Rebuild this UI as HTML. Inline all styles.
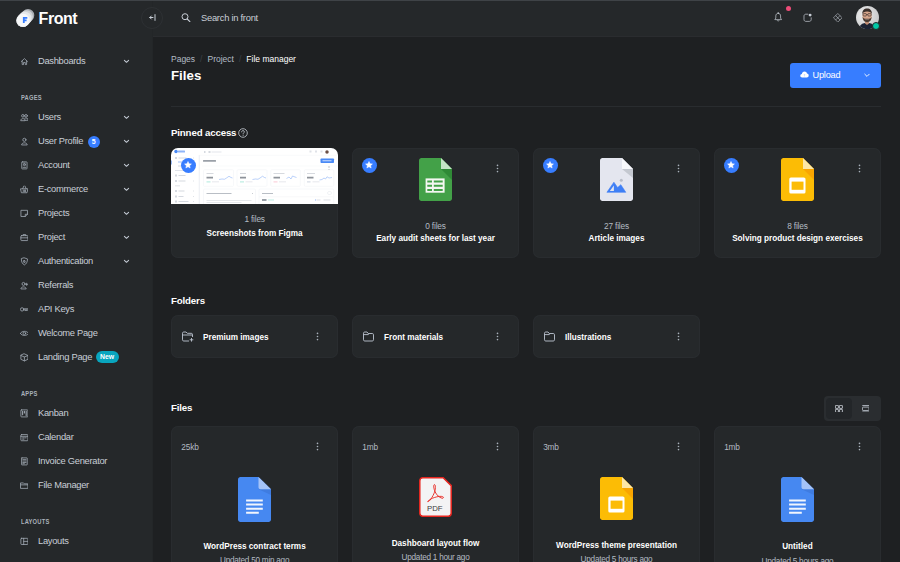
<!DOCTYPE html>
<html><head><meta charset="utf-8">
<style>
*{box-sizing:border-box;margin:0;padding:0}
html,body{width:900px;height:562px;overflow:hidden;background:#1e2022;font-family:"Liberation Sans",sans-serif;color:#fff}
svg{display:block}
#topline{position:absolute;left:0;top:0;width:900px;height:1px;background:#3f4347;z-index:5}
#header{position:absolute;left:0;top:0;width:900px;height:37px;background:transparent}
#hbg{position:absolute;left:0;top:0;width:900px;height:37px;background:#25282a;border-bottom:1px solid #2a2c2f}
#sidebar{position:absolute;left:0;top:0;width:153px;height:562px;background:#25282a;border-right:1px solid #232628}
.nav{position:absolute;left:0;width:150px;height:16px;font-size:9.35px;letter-spacing:-0.3px;color:#c8ced6;line-height:16px}
.nav .t{position:absolute;left:38px;top:0.2px;white-space:nowrap}
.nav svg.i{position:absolute;left:19.6px;top:3.8px;width:8.8px;height:8.8px}
.nav .chev{position:absolute;left:123.3px;top:5px;width:7px;height:7px}
.sub{position:absolute;left:21px;font-size:6.7px;font-weight:bold;letter-spacing:0.25px;color:#a8b0b9;line-height:10px;top:0;transform:scaleX(0.86);transform-origin:0 0;white-space:nowrap}
.b5{display:inline-block;width:12px;height:12px;border-radius:50%;background:#377dff;color:#fff;font-size:7px;font-weight:bold;text-align:center;line-height:12px;margin-left:4.6px;vertical-align:0px;letter-spacing:0}
.bnew{display:inline-block;padding:0 4.4px;height:11.6px;border-radius:6px;background:#09a5be;color:#fff;font-size:6.9px;font-weight:bold;line-height:11.6px;margin-left:3.6px;vertical-align:1px;letter-spacing:0}
.card{position:absolute;background:#25282a;border-radius:7px;box-shadow:inset 0 0 0 1px #292c2f}
.ttl{position:absolute;font-weight:bold;font-size:9.7px;letter-spacing:-0.15px;color:#fff;white-space:nowrap;line-height:12px}
.ctr{position:absolute;left:0;width:100%;text-align:center;white-space:nowrap}
.cnt{font-size:8.3px;letter-spacing:-0.18px;color:#b4bbc3;line-height:10px}
.nm{font-size:8.2px;font-weight:bold;color:#fff;line-height:10px}
.dots{position:absolute;width:3px;height:9px}
.star{position:absolute;width:15px;height:15px;border-radius:50%;background:#377dff}
.star svg{position:absolute;left:3.5px;top:3.5px;width:8px;height:8px}

.upd{font-size:8.2px;letter-spacing:-0.25px}

</style></head><body>
<div id="hbg"></div>
<div id="header" style="z-index:4">
  <!-- logo -->
  <svg style="position:absolute;left:15.2px;top:8.8px" width="21" height="21" viewBox="0 0 21 21">
    <path d="M7.8 11.6 L13 6.3" stroke="#a9adb2" stroke-width="12.6" stroke-linecap="round"/>
    <path d="M7.8 11.6 L11.6 7.6" stroke="#cfd2d5" stroke-width="12.8" stroke-linecap="round"/>
    <path d="M7.8 11.6 L10 9.3" stroke="#e6e8ea" stroke-width="13" stroke-linecap="round"/>
    <circle cx="8.3" cy="11.2" r="6.4" fill="#f7f8f9"/>
    <path d="M8.8 8 V14.1 M8 8.9 H12.3 M8 11.3 H11.6" stroke="#377dff" stroke-width="1.8" fill="none"/>
  </svg>
  <div style="position:absolute;left:38.6px;top:8.9px;font-size:16px;letter-spacing:-0.45px;font-weight:bold;color:#fff;line-height:20px">Front</div>
  <!-- collapse -->
  <div style="position:absolute;left:141px;top:7.2px;width:22px;height:22px;border-radius:50%;border:1px solid #2e3134;background:#25282a;z-index:3">
    <svg style="position:absolute;left:7px;top:6px" width="7" height="7" viewBox="0 0 7 7"><path d="M4 3.5 H0.8 M2.3 2 L0.8 3.5 L2.3 5 M6 0.6 V6.4" stroke="#c8ced6" stroke-width="1" fill="none" stroke-linecap="round" stroke-linejoin="round"/></svg>
  </div>
  <!-- search -->
  <svg style="position:absolute;left:180.5px;top:12.8px" width="10" height="9" viewBox="0 0 10 9"><circle cx="4" cy="3.7" r="3" stroke="#c8ced6" stroke-width="1" fill="none"/><path d="M6.2 6 L8.9 8.6" stroke="#c8ced6" stroke-width="1.1" stroke-linecap="round"/></svg>
  <div style="position:absolute;left:201px;top:11.7px;font-size:9.4px;letter-spacing:-0.27px;color:#c8ced6;line-height:11px;white-space:nowrap">Search in front</div>
  <!-- right icons -->
  <svg style="position:absolute;left:774.4px;top:12.3px" width="8.4" height="10" viewBox="0 0 8.4 10"><path d="M4.2 1.3 C2.7 1.3 1.8 2.4 1.8 3.9 V6.1 L0.8 7.6 H7.6 L6.6 6.1 V3.9 C6.6 2.4 5.7 1.3 4.2 1.3 Z M3.3 8.6 C3.6 9.3 4.8 9.3 5.1 8.6 M4.2 0.4 V1.3" stroke="#c8ced6" stroke-width="0.7" fill="none" stroke-linejoin="round" stroke-linecap="round"/></svg>
  <div style="position:absolute;left:785.6px;top:5.6px;width:5.4px;height:5.4px;border-radius:50%;background:#ed4c78"></div>
  <svg style="position:absolute;left:803.4px;top:12.6px" width="9.2" height="9.2" viewBox="0 0 9.2 9.2"><path d="M5.2 1.2 H2.8 C1.8 1.2 1 2 1 3 V6.6 C1 7.6 1.8 8.4 2.8 8.4 H6.4 C7.4 8.4 8.2 7.6 8.2 6.6 V4.4" stroke="#c8ced6" stroke-width="0.7" fill="none"/><circle cx="7.1" cy="2.1" r="1.45" fill="#c8ced6"/></svg>
  <svg style="position:absolute;left:832.5px;top:12.6px" width="9.6" height="9.6" viewBox="0 0 10 10"><path d="M5 0.5 L9.5 5 L5 9.5 L0.5 5 Z M2.75 2.75 L7.25 7.25 M7.25 2.75 L2.75 7.25" stroke="#c8ced6" stroke-width="0.6" fill="none" stroke-linejoin="round"/></svg>
  <!-- avatar -->
  <div style="position:absolute;left:856px;top:6.3px;width:23px;height:23px;border-radius:50%;overflow:hidden">
    <svg width="23" height="23" viewBox="0 0 23 23">
      <defs><radialGradient id="ag" cx="0.35" cy="0.4" r="0.75"><stop offset="0" stop-color="#f0f0f0"/><stop offset="1" stop-color="#c2c3c5"/></radialGradient></defs>
      <rect width="23" height="23" fill="url(#ag)"/>
      <path d="M2.5 23 C3.5 18.8 7 16.8 11 16.8 C15 16.8 18.5 18.8 19.5 23 Z" fill="#1b2234"/>
      <path d="M9 15 H13 V17.5 L11 19 L9 17.5 Z" fill="#c08d74"/>
      <ellipse cx="11.1" cy="9.8" rx="4.7" ry="6.1" fill="#d7a68c"/>
      <path d="M6.3 8.5 C6 4.5 8.2 2.6 11.1 2.6 C14 2.6 16.2 4.5 15.9 8.5 C15.2 6.4 14 5.6 11.1 5.6 C8.2 5.6 7 6.4 6.3 8.5 Z" fill="#3b302b"/>
      <path d="M6.6 10.8 C6.8 14.8 8.8 16.2 11.1 16.2 C13.4 16.2 15.4 14.8 15.6 10.8 C15 12.6 13.6 12.8 11.1 12.8 C8.6 12.8 7.2 12.6 6.6 10.8 Z" fill="#4a3b33"/>
      <path d="M9.3 13.2 C10.3 13.9 11.9 13.9 12.9 13.2 C12.4 14.4 9.8 14.4 9.3 13.2 Z" fill="#f4e9e4"/>
      <rect x="7" y="7.6" width="3.4" height="2.4" rx="0.8" fill="none" stroke="#2a2422" stroke-width="0.6"/>
      <rect x="11.8" y="7.6" width="3.4" height="2.4" rx="0.8" fill="none" stroke="#2a2422" stroke-width="0.6"/>
      <path d="M10.4 8.5 H11.8" stroke="#2a2422" stroke-width="0.5"/>
    </svg>
  </div>
  <div style="position:absolute;left:871.6px;top:21.8px;width:8.4px;height:8.4px;border-radius:50%;background:#00c9a7;border:1.2px solid #25282a"></div>
</div>
<div id="sidebar" style="z-index:2">
<div class="nav" style="top:53px"><svg class="i" viewBox="0 0 10 10" stroke="#a3abb5" stroke-width="0.9" fill="none" stroke-linecap="round" stroke-linejoin="round" ><path d="M1.5 5.2 L5 1.8 L8.5 5.2 M2.5 4.4 V8.6 H4 V6.2 H6 V8.6 H7.5 V4.4"/></svg><span class="t">Dashboards</span><svg class="chev" viewBox="0 0 7 7"><path d="M1.4 2.4 L3.5 4.3 L5.6 2.4" stroke="#c5ccd5" stroke-width="1.05" fill="none" stroke-linecap="round" stroke-linejoin="round"/></svg></div>
<div class="nav" style="top:109px"><svg class="i" viewBox="0 0 10 10" stroke="#a3abb5" stroke-width="0.9" fill="none" stroke-linecap="round" stroke-linejoin="round" ><circle cx="3.3" cy="3.2" r="1.5"/><circle cx="6.9" cy="3.2" r="1.5"/><path d="M0.8 8.3 C0.8 5.6 5.8 5.6 5.8 8.3 Z M5.4 5.9 C7 5.2 9.4 5.8 9.4 8.3 H5.9"/></svg><span class="t">Users</span><svg class="chev" viewBox="0 0 7 7"><path d="M1.4 2.4 L3.5 4.3 L5.6 2.4" stroke="#c5ccd5" stroke-width="1.05" fill="none" stroke-linecap="round" stroke-linejoin="round"/></svg></div>
<div class="nav" style="top:133px"><svg class="i" viewBox="0 0 10 10" stroke="#a3abb5" stroke-width="0.9" fill="none" stroke-linecap="round" stroke-linejoin="round" ><circle cx="5" cy="3.2" r="1.8"/><path d="M1.8 8.6 C1.8 5.8 8.2 5.8 8.2 8.6 Z"/></svg><span class="t">User Profile<span class="b5">5</span></span><svg class="chev" viewBox="0 0 7 7"><path d="M1.4 2.4 L3.5 4.3 L5.6 2.4" stroke="#c5ccd5" stroke-width="1.05" fill="none" stroke-linecap="round" stroke-linejoin="round"/></svg></div>
<div class="nav" style="top:157px"><svg class="i" viewBox="0 0 10 10" stroke="#a3abb5" stroke-width="0.9" fill="none" stroke-linecap="round" stroke-linejoin="round" ><rect x="2" y="1" width="6" height="8" rx="0.6"/><circle cx="5" cy="4.3" r="1.1"/><path d="M3.4 7.2 H6.6 M4 2.4 H6"/></svg><span class="t">Account</span><svg class="chev" viewBox="0 0 7 7"><path d="M1.4 2.4 L3.5 4.3 L5.6 2.4" stroke="#c5ccd5" stroke-width="1.05" fill="none" stroke-linecap="round" stroke-linejoin="round"/></svg></div>
<div class="nav" style="top:181px"><svg class="i" viewBox="0 0 10 10" stroke="#a3abb5" stroke-width="0.9" fill="none" stroke-linecap="round" stroke-linejoin="round" ><path d="M1 4.3 H9 L8 8.8 H2 Z M3 4.3 L4.3 1.3 M7 4.3 L5.7 1.3 M3.7 5.6 V7.5 M5 5.6 V7.5 M6.3 5.6 V7.5"/></svg><span class="t">E-commerce</span><svg class="chev" viewBox="0 0 7 7"><path d="M1.4 2.4 L3.5 4.3 L5.6 2.4" stroke="#c5ccd5" stroke-width="1.05" fill="none" stroke-linecap="round" stroke-linejoin="round"/></svg></div>
<div class="nav" style="top:205px"><svg class="i" viewBox="0 0 10 10" stroke="#a3abb5" stroke-width="0.9" fill="none" stroke-linecap="round" stroke-linejoin="round" ><path d="M1.5 1.5 H8.5 V6 L6 8.5 H1.5 Z M8.5 6 H6 V8.5"/></svg><span class="t">Projects</span><svg class="chev" viewBox="0 0 7 7"><path d="M1.4 2.4 L3.5 4.3 L5.6 2.4" stroke="#c5ccd5" stroke-width="1.05" fill="none" stroke-linecap="round" stroke-linejoin="round"/></svg></div>
<div class="nav" style="top:229px"><svg class="i" viewBox="0 0 10 10" stroke="#a3abb5" stroke-width="0.9" fill="none" stroke-linecap="round" stroke-linejoin="round" ><rect x="1" y="3" width="8" height="5.6" rx="0.7"/><path d="M3.5 3 V1.8 H6.5 V3 M1 5.5 H9"/></svg><span class="t">Project</span><svg class="chev" viewBox="0 0 7 7"><path d="M1.4 2.4 L3.5 4.3 L5.6 2.4" stroke="#c5ccd5" stroke-width="1.05" fill="none" stroke-linecap="round" stroke-linejoin="round"/></svg></div>
<div class="nav" style="top:253px"><svg class="i" viewBox="0 0 10 10" stroke="#a3abb5" stroke-width="0.9" fill="none" stroke-linecap="round" stroke-linejoin="round" ><path d="M5 1 L8.5 2.2 C8.5 6 7 8 5 9 C3 8 1.5 6 1.5 2.2 Z"/><rect x="4.2" y="4.2" width="1.6" height="2" rx="0.3"/></svg><span class="t">Authentication</span><svg class="chev" viewBox="0 0 7 7"><path d="M1.4 2.4 L3.5 4.3 L5.6 2.4" stroke="#c5ccd5" stroke-width="1.05" fill="none" stroke-linecap="round" stroke-linejoin="round"/></svg></div>
<div class="nav" style="top:277px"><svg class="i" viewBox="0 0 10 10" stroke="#a3abb5" stroke-width="0.9" fill="none" stroke-linecap="round" stroke-linejoin="round" ><circle cx="4" cy="3.3" r="1.7"/><path d="M1 8.6 C1 5.9 7 5.9 7 8.6 Z M7.6 2.5 V5 M6.4 3.75 H8.9"/></svg><span class="t">Referrals</span></div>
<div class="nav" style="top:301px"><svg class="i" viewBox="0 0 10 10" stroke="#a3abb5" stroke-width="0.9" fill="none" stroke-linecap="round" stroke-linejoin="round" ><circle cx="2.4" cy="5" r="1.9"/><path d="M4.3 4.3 H9.6 L10 5 L9.6 5.7 H4.3 M6.5 5.7 V6.4 M7.8 5.7 V6.4"/></svg><span class="t">API Keys</span></div>
<div class="nav" style="top:325px"><svg class="i" viewBox="0 0 10 10" stroke="#a3abb5" stroke-width="0.9" fill="none" stroke-linecap="round" stroke-linejoin="round" ><path d="M0.3 5 C2.2 1.8 7.8 1.8 9.7 5 C7.8 8.2 2.2 8.2 0.3 5 Z"/><circle cx="5" cy="5" r="1.5"/></svg><span class="t">Welcome Page</span></div>
<div class="nav" style="top:349px"><svg class="i" viewBox="0 0 10 10" stroke="#a3abb5" stroke-width="0.9" fill="none" stroke-linecap="round" stroke-linejoin="round" ><path d="M5 1 L9 2.8 V7.2 L5 9 L1 7.2 V2.8 Z M1 2.8 L5 4.6 L9 2.8 M5 4.6 V9"/></svg><span class="t">Landing Page<span class="bnew">New</span></span></div>
<div class="nav" style="top:405px"><svg class="i" viewBox="0 0 10 10" stroke="#a3abb5" stroke-width="0.9" fill="none" stroke-linecap="round" stroke-linejoin="round" ><rect x="1" y="1" width="8" height="8" rx="0.8"/><path d="M3 2.5 V6.5 M5 2.5 V4.5 M7 2.5 V7.5" stroke-width="1.2"/></svg><span class="t">Kanban</span></div>
<div class="nav" style="top:429px"><svg class="i" viewBox="0 0 10 10" stroke="#a3abb5" stroke-width="0.9" fill="none" stroke-linecap="round" stroke-linejoin="round" ><rect x="1" y="1.8" width="8" height="7" rx="0.8"/><path d="M1 3.8 H9 M3 5.5 H4.5 M5.5 5.5 H7 M3 7 H4.5"/></svg><span class="t">Calendar</span></div>
<div class="nav" style="top:453px"><svg class="i" viewBox="0 0 10 10" stroke="#a3abb5" stroke-width="0.9" fill="none" stroke-linecap="round" stroke-linejoin="round" ><rect x="1.8" y="1" width="6.4" height="8" rx="0.4"/><path d="M3.2 3 H6.8 M3.2 4.6 H6.8 M3.2 6.2 H6.8 M3.2 7.6 H5"/></svg><span class="t">Invoice Generator</span></div>
<div class="nav" style="top:477px"><svg class="i" viewBox="0 0 10 10" stroke="#a3abb5" stroke-width="0.9" fill="none" stroke-linecap="round" stroke-linejoin="round" ><path d="M1 2.2 H4 L5 3.2 H9 V8.4 H1 Z M1 4.4 H9"/></svg><span class="t">File Manager</span></div>
<div class="nav" style="top:533px"><svg class="i" viewBox="0 0 10 10" stroke="#a3abb5" stroke-width="0.9" fill="none" stroke-linecap="round" stroke-linejoin="round" ><rect x="1" y="1.5" width="8" height="7" rx="0.6"/><path d="M4.2 1.5 V8.5 M4.2 5 H9"/></svg><span class="t">Layouts</span></div>
<div class="sub" style="top:92.6px">PAGES</div>
<div class="sub" style="top:388.6px">APPS</div>
<div class="sub" style="top:516.6px">LAYOUTS</div>
</div>
<div id="topline"></div>

<!-- main -->
<div style="position:absolute;left:171px;top:54px;font-size:8.5px;line-height:10px;white-space:nowrap;color:#bdc5d1">
  <span style="color:#b4bcc6">Pages</span><span style="color:#3d4146;margin:0 5px">/</span><span style="color:#b4bcc6">Project</span><span style="color:#3d4146;margin:0 5px">/</span><span style="color:#fff">File manager</span>
</div>
<div style="position:absolute;left:171px;top:67.5px;font-size:13.3px;font-weight:bold;line-height:15px">Files</div>

<div style="position:absolute;left:790px;top:63px;width:91px;height:25px;border-radius:3px;background:#377dff">
  <svg style="position:absolute;left:9.5px;top:7.7px" width="9" height="7" viewBox="0 0 9 7"><path d="M2.2 6.5 C1 6.5 0.3 5.7 0.3 4.8 C0.3 3.9 1 3.2 1.9 3.1 C2 1.6 3.1 0.5 4.5 0.5 C5.8 0.5 6.8 1.4 7 2.6 C8 2.7 8.7 3.5 8.7 4.5 C8.7 5.6 7.9 6.5 6.8 6.5 Z" fill="#fff"/><path d="M4.5 5.5 V3.2 M3.6 4.1 L4.5 3.2 L5.4 4.1" stroke="#b9d1ff" stroke-width="0.6" fill="none"/></svg>
  <div style="position:absolute;left:22.5px;top:7px;font-size:9.2px;letter-spacing:-0.2px;color:#fff;line-height:11px">Upload</div>
  <svg style="position:absolute;left:73.5px;top:10px" width="6" height="5" viewBox="0 0 6 5"><path d="M0.8 1.2 L3 3.4 L5.2 1.2" stroke="#fff" stroke-width="0.9" fill="none" stroke-linecap="round" stroke-linejoin="round"/></svg>
</div>
<div style="position:absolute;left:171px;top:106px;width:710px;height:1px;background:#292c2f"></div>

<div class="ttl" style="left:171px;top:127px">Pinned access</div>
<svg style="position:absolute;left:238px;top:128px" width="10" height="10" viewBox="0 0 10 10"><circle cx="5" cy="5" r="4.3" stroke="#c8ced6" stroke-width="0.8" fill="none"/><path d="M3.6 3.9 C3.6 3.1 4.2 2.6 5 2.6 C5.8 2.6 6.4 3.1 6.4 3.8 C6.4 4.7 5.1 4.8 5.1 5.9" stroke="#c8ced6" stroke-width="0.8" fill="none" stroke-linecap="round"/><circle cx="5.1" cy="7.3" r="0.5" fill="#c8ced6"/></svg>

<div class="card" style="left:171px;top:148px;width:167.2px;height:110px;overflow:hidden"><svg width="167" height="56" viewBox="0 0 334 112" style="position:absolute;left:0;top:0">
<rect width="334" height="112" fill="#ffffff"/>
<line x1="56.5" y1="14" x2="56.5" y2="112" stroke="#e3e7ee" stroke-width="1.5"/>
<line x1="56" y1="14.5" x2="334" y2="14.5" stroke="#f0f2f6" stroke-width="1"/>
<line x1="62" y1="36" x2="334" y2="36" stroke="#f2f4f7" stroke-width="1"/>
<circle cx="10" cy="7" r="3.5" fill="#4a8af6"/><rect x="14" y="5" width="14" height="4" rx="1" fill="#8fb5f8"/>
<g fill="#d5d9e0"><rect x="8" y="18" width="4" height="4"/><rect x="15" y="19" width="16" height="2"/><rect x="14" y="27" width="14" height="2" fill="#9dbdf7"/><rect x="14" y="35" width="10" height="2"/>
<rect x="8" y="44" width="22" height="1.5"/><rect x="8" y="53" width="4" height="4"/><rect x="15" y="54" width="14" height="2"/><rect x="8" y="64" width="4" height="4"/><rect x="15" y="65" width="14" height="2"/>
<rect x="8" y="75" width="10" height="1.5"/><rect x="8" y="84" width="4" height="4"/><rect x="15" y="85" width="12" height="2"/><rect x="8" y="95" width="4" height="4"/><rect x="15" y="96" width="10" height="2"/><rect x="8" y="105" width="4" height="4"/><rect x="15" y="106" width="20" height="2"/></g>
<g fill="#e0e3e8"><rect x="44" y="19" width="2" height="2"/><rect x="44" y="65" width="2" height="2"/><rect x="44" y="85" width="2" height="2"/><rect x="44" y="96" width="2" height="2"/><rect x="44" y="106" width="2" height="2"/></g>
<rect x="0" y="25" width="2" height="8" fill="#9dbdf7"/>
<rect x="66" y="6" width="3" height="4" fill="#d5d9e0"/><rect x="75" y="6" width="4" height="4" fill="#d5d9e0"/><rect x="81" y="7" width="20" height="2" fill="#e3e6eb"/>
<g fill="#dfe2e8"><rect x="277" y="5" width="4" height="4"/><rect x="288" y="5" width="4" height="4"/><rect x="299" y="5" width="4" height="4"/></g><circle cx="312" cy="8" r="3.5" fill="#6b4f45"/>
<rect x="64" y="24" width="26" height="3.5" rx="1" fill="#9aa0a8"/>
<rect x="299" y="21" width="27" height="9" rx="1.5" fill="#4a8af6"/><rect x="303" y="24.5" width="18" height="2" fill="#c9dcfd"/>
<g fill="#8a8f96"><rect x="315" y="37" width="2" height="2"/><rect x="315" y="42" width="2" height="2"/><rect x="315" y="47" width="2" height="2"/></g>
<g fill="#ffffff" stroke="#eff1f5" stroke-width="1">
<rect x="65" y="43.5" width="60" height="33" rx="2"/><rect x="132" y="43.5" width="60" height="33" rx="2"/><rect x="199.5" y="43.5" width="59" height="33" rx="2"/><rect x="266.5" y="43.5" width="59" height="33" rx="2"/>
<rect x="65" y="82" width="104" height="34" rx="2"/><rect x="176" y="82" width="149.5" height="34" rx="2"/>
</g>
<g fill="#c9cdd3"><rect x="71" y="50" width="14" height="1.5"/><rect x="138" y="50" width="12" height="1.5"/><rect x="205" y="50" width="22" height="1.5"/><rect x="272" y="50" width="16" height="1.5"/></g>
<g fill="#8d9299"><rect x="71" y="57.5" width="13" height="3.5"/><rect x="138" y="57.5" width="12" height="3.5"/><rect x="205" y="57.5" width="13" height="3.5"/><rect x="272" y="57.5" width="13" height="3.5"/></g>
<g fill="#bfeee3"><rect x="71" y="66.5" width="8" height="2.5"/><rect x="138" y="66.5" width="8" height="2.5"/></g><rect x="205" y="66.5" width="8" height="2.5" fill="#fcd3dd"/><rect x="272" y="66.5" width="7" height="2.5" fill="#d8dde6"/>
<g fill="#dde0e5"><rect x="82" y="67" width="14" height="1.5"/><rect x="149" y="67" width="14" height="1.5"/><rect x="216" y="67" width="14" height="1.5"/><rect x="283" y="67" width="14" height="1.5"/></g>
<g fill="none" stroke="#8fb3f6" stroke-width="1.2"><path d="M96 63 L102 62 L107 62.5 L111 60 L116 56.5 L120 59 L123 60"/><path d="M163 63 L169 62 L174 62.5 L178 60 L183 56.5 L187 59 L190 60"/><path d="M231 61 L236 58 L240 62 L243 56 L248 58 L251 59"/><path d="M297 64 L302 63 L306 60 L309 62 L312 57.5 L316 60 L322 59"/></g>
<rect x="71" y="90" width="50" height="2" fill="#b9bec5"/><rect x="162" y="90" width="2" height="2" fill="#c9cdd3"/>
<rect x="71" y="104" width="90" height="1.5" fill="#dde0e5"/><rect x="71" y="108" width="70" height="1.5" fill="#dde0e5"/>
<rect x="182" y="90" width="22" height="2" fill="#b9bec5"/><rect x="313" y="87" width="8" height="6" rx="3" fill="none" stroke="#e3e6ea" stroke-width="1"/>
<line x1="176" y1="97.5" x2="325" y2="97.5" stroke="#f0f2f5" stroke-width="1"/>
<rect x="182" y="102" width="9" height="4" fill="#9aa0a8"/><rect x="194" y="103" width="12" height="2" fill="#bfeee3"/>
<g fill="#dde0e5"><rect x="291" y="103" width="8" height="2"/><rect x="305" y="103" width="14" height="2"/></g><rect x="288" y="103" width="2" height="2" fill="#8fb3f6"/>
</svg>
<div class="ctr cnt" style="top:66px">1 files</div>
<div class="ctr nm" style="top:80.49999999999999px">Screenshots from Figma</div></div>
<div class="star" style="left:180.9px;top:157.5px"><svg viewBox="0 0 10 10"><path d="M5 0.6 L6.3 3.4 L9.3 3.7 L7 5.8 L7.7 8.8 L5 7.2 L2.3 8.8 L3 5.8 L0.7 3.7 L3.7 3.4 Z" fill="#fff" stroke="#fff" stroke-width="0.6" stroke-linejoin="round"/></svg></div>
<div class="card" style="left:351.95px;top:148px;width:167.2px;height:110px">
<svg style="position:absolute;left:67px;top:10px" width="33" height="43" viewBox="0 0 33 43"><path d="M2.5 0 H22 L33 11 V40.5 C33 41.9 31.9 43 30.5 43 H2.5 C1.1 43 0 41.9 0 40.5 V2.5 C0 1.1 1.1 0 2.5 0 Z" fill="#43a148"/>
<path d="M22 11 L33 11 V22 Z" fill="#2f8a36"/>
<path d="M22 0 L33 11 H22 Z" fill="#c5e5c6"/>
<rect x="6.6" y="20.4" width="19" height="14.3" fill="#f4f7f2"/>
<path d="M8.3 22.6 H13 V24.6 H8.3 Z M14.8 22.6 H23.7 V24.6 H14.8 Z M8.3 26.8 H13 V28.8 H8.3 Z M14.8 26.8 H23.7 V28.8 H14.8 Z M8.3 30.9 H13 V32.9 H8.3 Z M14.8 30.9 H23.7 V32.9 H14.8 Z" fill="#43a148"/></svg>
<svg style="position:absolute;left:144.5px;top:16.0px" width="3" height="9" viewBox="0 0 3 9"><g fill="#a9b1bb"><circle cx="1.5" cy="1.4" r="0.8"/><circle cx="1.5" cy="4.5" r="0.8"/><circle cx="1.5" cy="7.6" r="0.8"/></g></svg>
<div class="ctr cnt" style="top:72.69999999999999px">0 files</div>
<div class="ctr nm" style="top:86.3px">Early audit sheets for last year</div></div>
<div class="star" style="left:361.84999999999997px;top:157.9px"><svg viewBox="0 0 10 10"><path d="M5 0.6 L6.3 3.4 L9.3 3.7 L7 5.8 L7.7 8.8 L5 7.2 L2.3 8.8 L3 5.8 L0.7 3.7 L3.7 3.4 Z" fill="#fff" stroke="#fff" stroke-width="0.6" stroke-linejoin="round"/></svg></div>
<div class="card" style="left:532.9px;top:148px;width:167.2px;height:110px">
<svg style="position:absolute;left:67px;top:10px" width="33" height="43" viewBox="0 0 33 43"><path d="M2.5 0 H22 L33 11 V40.5 C33 41.9 31.9 43 30.5 43 H2.5 C1.1 43 0 41.9 0 40.5 V2.5 C0 1.1 1.1 0 2.5 0 Z" fill="#e4e6ef"/>
<path d="M22 0 L33 11 H22 Z" fill="#f7f8fb"/>
<path d="M22 11 L33 11 V20 Z" fill="#c4c8d0"/>
<path d="M6.9 34.3 L13.9 24.2 L17.6 29.6 L20.8 26.7 L25.8 34.3 Z" fill="#3f7ff5" stroke="#3f7ff5" stroke-width="0.6" stroke-linejoin="round"/>
<path d="M9.8 32.9 L13.9 27.6 V32.9 Z" fill="#e4e6ef"/>
<circle cx="21.3" cy="22.2" r="1.5" fill="#b7bcc6"/></svg>
<svg style="position:absolute;left:144.5px;top:16.0px" width="3" height="9" viewBox="0 0 3 9"><g fill="#a9b1bb"><circle cx="1.5" cy="1.4" r="0.8"/><circle cx="1.5" cy="4.5" r="0.8"/><circle cx="1.5" cy="7.6" r="0.8"/></g></svg>
<div class="ctr cnt" style="top:72.69999999999999px">27 files</div>
<div class="ctr nm" style="top:86.3px">Article images</div></div>
<div class="star" style="left:542.8px;top:157.9px"><svg viewBox="0 0 10 10"><path d="M5 0.6 L6.3 3.4 L9.3 3.7 L7 5.8 L7.7 8.8 L5 7.2 L2.3 8.8 L3 5.8 L0.7 3.7 L3.7 3.4 Z" fill="#fff" stroke="#fff" stroke-width="0.6" stroke-linejoin="round"/></svg></div>
<div class="card" style="left:713.85px;top:148px;width:167.2px;height:110px">
<svg style="position:absolute;left:67px;top:10px" width="33" height="43" viewBox="0 0 33 43"><path d="M2.5 0 H22 L33 11 V40.5 C33 41.9 31.9 43 30.5 43 H2.5 C1.1 43 0 41.9 0 40.5 V2.5 C0 1.1 1.1 0 2.5 0 Z" fill="#fcbc05"/>
<path d="M22 11 L33 11 V22 Z" fill="#f9a500"/>
<path d="M22 0 L33 11 H22 Z" fill="#fde7a6"/>
<rect x="8.3" y="19.4" width="16.2" height="16.2" rx="1.6" fill="#fff"/>
<rect x="10.6" y="23.6" width="11.9" height="8.2" fill="#fcbc05"/></svg>
<svg style="position:absolute;left:144.5px;top:16.0px" width="3" height="9" viewBox="0 0 3 9"><g fill="#a9b1bb"><circle cx="1.5" cy="1.4" r="0.8"/><circle cx="1.5" cy="4.5" r="0.8"/><circle cx="1.5" cy="7.6" r="0.8"/></g></svg>
<div class="ctr cnt" style="top:72.69999999999999px">8 files</div>
<div class="ctr nm" style="top:86.3px">Solving product design exercises</div></div>
<div class="star" style="left:723.75px;top:157.9px"><svg viewBox="0 0 10 10"><path d="M5 0.6 L6.3 3.4 L9.3 3.7 L7 5.8 L7.7 8.8 L5 7.2 L2.3 8.8 L3 5.8 L0.7 3.7 L3.7 3.4 Z" fill="#fff" stroke="#fff" stroke-width="0.6" stroke-linejoin="round"/></svg></div>

<div class="ttl" style="left:171px;top:294.6px">Folders</div>
<div class="card" style="left:171px;top:315px;width:167.2px;height:43px"><svg style="position:absolute;left:10px;top:15.5px" width="13" height="11" viewBox="0 0 13 11"><path d="M8 10 H2.7 C2 10 1.5 9.5 1.5 8.8 V2.2 C1.5 1.5 2 1 2.7 1 H5 L6.3 2.3 H10.3 C11 2.3 11.5 2.8 11.5 3.5 V6 M1.5 4 H11.5" stroke="#bdc5d1" stroke-width="0.9" fill="none" stroke-linejoin="round"/><path d="M10.5 7 V10.6 M8.7 8.8 H12.3" stroke="#bdc5d1" stroke-width="0.9"/></svg>
<div class="nm" style="position:absolute;left:32px;top:18px;white-space:nowrap">Premium images</div>
<svg style="position:absolute;left:144.5px;top:17.0px" width="3" height="9" viewBox="0 0 3 9"><g fill="#a9b1bb"><circle cx="1.5" cy="1.4" r="0.8"/><circle cx="1.5" cy="4.5" r="0.8"/><circle cx="1.5" cy="7.6" r="0.8"/></g></svg></div>
<div class="card" style="left:351.95px;top:315px;width:167.2px;height:43px"><svg style="position:absolute;left:10px;top:15.5px" width="13" height="11" viewBox="0 0 13 11"><path d="M2.7 10 C2 10 1.5 9.5 1.5 8.8 V2.2 C1.5 1.5 2 1 2.7 1 H5 L6.3 2.5 H10.3 C11 2.5 11.5 3 11.5 3.7 V8.8 C11.5 9.5 11 10 10.3 10 Z M1.6 3.6 H6.3 L6.3 2.5" stroke="#bdc5d1" stroke-width="0.9" fill="none" stroke-linejoin="round"/></svg>
<div class="nm" style="position:absolute;left:32px;top:18px;white-space:nowrap">Front materials</div>
<svg style="position:absolute;left:144.5px;top:17.0px" width="3" height="9" viewBox="0 0 3 9"><g fill="#a9b1bb"><circle cx="1.5" cy="1.4" r="0.8"/><circle cx="1.5" cy="4.5" r="0.8"/><circle cx="1.5" cy="7.6" r="0.8"/></g></svg></div>
<div class="card" style="left:532.9px;top:315px;width:167.2px;height:43px"><svg style="position:absolute;left:10px;top:15.5px" width="13" height="11" viewBox="0 0 13 11"><path d="M2.7 10 C2 10 1.5 9.5 1.5 8.8 V2.2 C1.5 1.5 2 1 2.7 1 H5 L6.3 2.5 H10.3 C11 2.5 11.5 3 11.5 3.7 V8.8 C11.5 9.5 11 10 10.3 10 Z M1.6 3.6 H6.3 L6.3 2.5" stroke="#bdc5d1" stroke-width="0.9" fill="none" stroke-linejoin="round"/></svg>
<div class="nm" style="position:absolute;left:32px;top:18px;white-space:nowrap">Illustrations</div>
<svg style="position:absolute;left:144.5px;top:17.0px" width="3" height="9" viewBox="0 0 3 9"><g fill="#a9b1bb"><circle cx="1.5" cy="1.4" r="0.8"/><circle cx="1.5" cy="4.5" r="0.8"/><circle cx="1.5" cy="7.6" r="0.8"/></g></svg></div>

<div class="ttl" style="left:171px;top:402px">Files</div>
<div style="position:absolute;left:824px;top:396px;width:57px;height:25px;border-radius:4px;background:#2a2d30">
  <div style="position:absolute;left:2px;top:2px;width:26px;height:21px;border-radius:4px;background:#232629"></div>
  <svg style="position:absolute;left:11.2px;top:8.6px" width="7.8" height="7.8" viewBox="0 0 7.8 7.8"><g stroke="#d0d5dc" stroke-width="0.8" fill="none"><rect x="0.4" y="0.4" width="3" height="3" rx="0.3"/><rect x="4.4" y="0.4" width="3" height="3" rx="0.3"/><rect x="0.4" y="4.4" width="3" height="3" rx="0.3"/><rect x="4.4" y="4.4" width="3" height="3" rx="0.3"/></g></svg>
  <svg style="position:absolute;left:37.8px;top:8.6px" width="7.6" height="7.6" viewBox="0 0 7.6 7.6"><path d="M0.3 0.55 H7.2 M0.3 7.05 H7.2" stroke="#b8bfc8" stroke-width="0.9"/><rect x="0.45" y="2.1" width="6.6" height="3.4" rx="0.6" stroke="#b8bfc8" stroke-width="0.85" fill="none"/></svg>
</div>
<div class="card" style="left:171px;top:425.6px;width:167.2px;height:160px">
<div class="cnt" style="position:absolute;left:10.3px;top:16.599999999999955px">25kb</div>
<svg style="position:absolute;left:144.5px;top:16.099999999999966px" width="3" height="9" viewBox="0 0 3 9"><g fill="#a9b1bb"><circle cx="1.5" cy="1.4" r="0.8"/><circle cx="1.5" cy="4.5" r="0.8"/><circle cx="1.5" cy="7.6" r="0.8"/></g></svg>
<svg style="position:absolute;left:66.8px;top:51px" width="33" height="45" viewBox="0 0 33 45"><path d="M2.5 0 H20.5 L33 12.2 V42.5 C33 43.9 31.9 45 30.5 45 H2.5 C1.1 45 0 43.9 0 42.5 V2.5 C0 1.1 1.1 0 2.5 0 Z" fill="#4688f1"/>
<path d="M20.5 12.2 L33 12.2 V18 Z" fill="#3f7ce0"/>
<path d="M20.5 0 L33 12.2 H22.5 C21.4 12.2 20.5 11.3 20.5 10.2 Z" fill="#a4c3f8"/>
<path d="M8.1 23.5 H24.8 M8.1 27.6 H24.8 M8.1 31.7 H24.8 M8.1 35.8 H20.8" stroke="#f1f5fd" stroke-width="2"/></svg>
<div class="ctr nm" style="top:116.39999999999993px">WordPress contract terms</div>
<div class="ctr cnt upd" style="top:130.90000000000003px">Updated 50 min ago</div></div>
<div class="card" style="left:351.95px;top:425.6px;width:167.2px;height:160px">
<div class="cnt" style="position:absolute;left:10.3px;top:16.599999999999955px">1mb</div>
<svg style="position:absolute;left:144.5px;top:16.099999999999966px" width="3" height="9" viewBox="0 0 3 9"><g fill="#a9b1bb"><circle cx="1.5" cy="1.4" r="0.8"/><circle cx="1.5" cy="4.5" r="0.8"/><circle cx="1.5" cy="7.6" r="0.8"/></g></svg>
<svg style="position:absolute;left:67px;top:51.1px" width="33" height="40" viewBox="0 0 33 40"><path d="M3.5 0.8 H24.2 L32.2 8.6 V36.3 C32.2 37.9 30.9 39.2 29.3 39.2 H3.7 C2.1 39.2 0.8 37.9 0.8 36.3 V3.7 C0.8 2.1 2.1 0.8 3.7 0.8 Z" fill="#f3f3f4" stroke="#e8261f" stroke-width="1.5" stroke-linejoin="round"/>
<path d="M15.4 7.6 C14.2 7.8 14.6 11.6 16.2 15 C17.6 18 20.4 20.6 23 21.2 C24.6 21.6 25 20 23.6 19.6 C20.6 18.6 13.8 20.6 10.5 22.8 C8.4 24.2 8.2 25.2 9.4 24.6 C11.4 23.6 15 17.6 16 13.6 C16.6 11 16.6 7.4 15.4 7.6 Z" fill="none" stroke="#e8261f" stroke-width="0.9" stroke-linejoin="round"/>
<text x="15.8" y="33.8" font-family="Liberation Sans" font-size="7.8" text-anchor="middle" fill="#3b3b3b">PDF</text></svg>
<div class="ctr nm" style="top:113.39999999999993px">Dashboard layout flow</div>
<div class="ctr cnt upd" style="top:127.3px">Updated 1 hour ago</div></div>
<div class="card" style="left:532.9px;top:425.6px;width:167.2px;height:160px">
<div class="cnt" style="position:absolute;left:10.3px;top:16.599999999999955px">3mb</div>
<svg style="position:absolute;left:144.5px;top:16.099999999999966px" width="3" height="9" viewBox="0 0 3 9"><g fill="#a9b1bb"><circle cx="1.5" cy="1.4" r="0.8"/><circle cx="1.5" cy="4.5" r="0.8"/><circle cx="1.5" cy="7.6" r="0.8"/></g></svg>
<svg style="position:absolute;left:67.2px;top:51px" width="33" height="43" viewBox="0 0 33 43"><path d="M2.5 0 H22 L33 11 V40.5 C33 41.9 31.9 43 30.5 43 H2.5 C1.1 43 0 41.9 0 40.5 V2.5 C0 1.1 1.1 0 2.5 0 Z" fill="#fcbc05"/>
<path d="M22 11 L33 11 V22 Z" fill="#f9a500"/>
<path d="M22 0 L33 11 H22 Z" fill="#fde7a6"/>
<rect x="8.3" y="19.4" width="16.2" height="16.2" rx="1.6" fill="#fff"/>
<rect x="10.6" y="23.6" width="11.9" height="8.2" fill="#fcbc05"/></svg>
<div class="ctr nm" style="top:115.2px">WordPress theme presentation</div>
<div class="ctr cnt upd" style="top:129.8px">Updated 5 hours ago</div></div>
<div class="card" style="left:713.85px;top:425.6px;width:167.2px;height:160px">
<div class="cnt" style="position:absolute;left:10.3px;top:16.599999999999955px">1mb</div>
<svg style="position:absolute;left:144.5px;top:16.099999999999966px" width="3" height="9" viewBox="0 0 3 9"><g fill="#a9b1bb"><circle cx="1.5" cy="1.4" r="0.8"/><circle cx="1.5" cy="4.5" r="0.8"/><circle cx="1.5" cy="7.6" r="0.8"/></g></svg>
<svg style="position:absolute;left:67px;top:51px" width="33" height="45" viewBox="0 0 33 45"><path d="M2.5 0 H20.5 L33 12.2 V42.5 C33 43.9 31.9 45 30.5 45 H2.5 C1.1 45 0 43.9 0 42.5 V2.5 C0 1.1 1.1 0 2.5 0 Z" fill="#4688f1"/>
<path d="M20.5 12.2 L33 12.2 V18 Z" fill="#3f7ce0"/>
<path d="M20.5 0 L33 12.2 H22.5 C21.4 12.2 20.5 11.3 20.5 10.2 Z" fill="#a4c3f8"/>
<path d="M8.1 23.5 H24.8 M8.1 27.6 H24.8 M8.1 31.7 H24.8 M8.1 35.8 H20.8" stroke="#f1f5fd" stroke-width="2"/></svg>
<div class="ctr nm" style="top:116.09999999999998px">Untitled</div>
<div class="ctr cnt upd" style="top:131.7px">Updated 5 hours ago</div></div>

</body></html>
